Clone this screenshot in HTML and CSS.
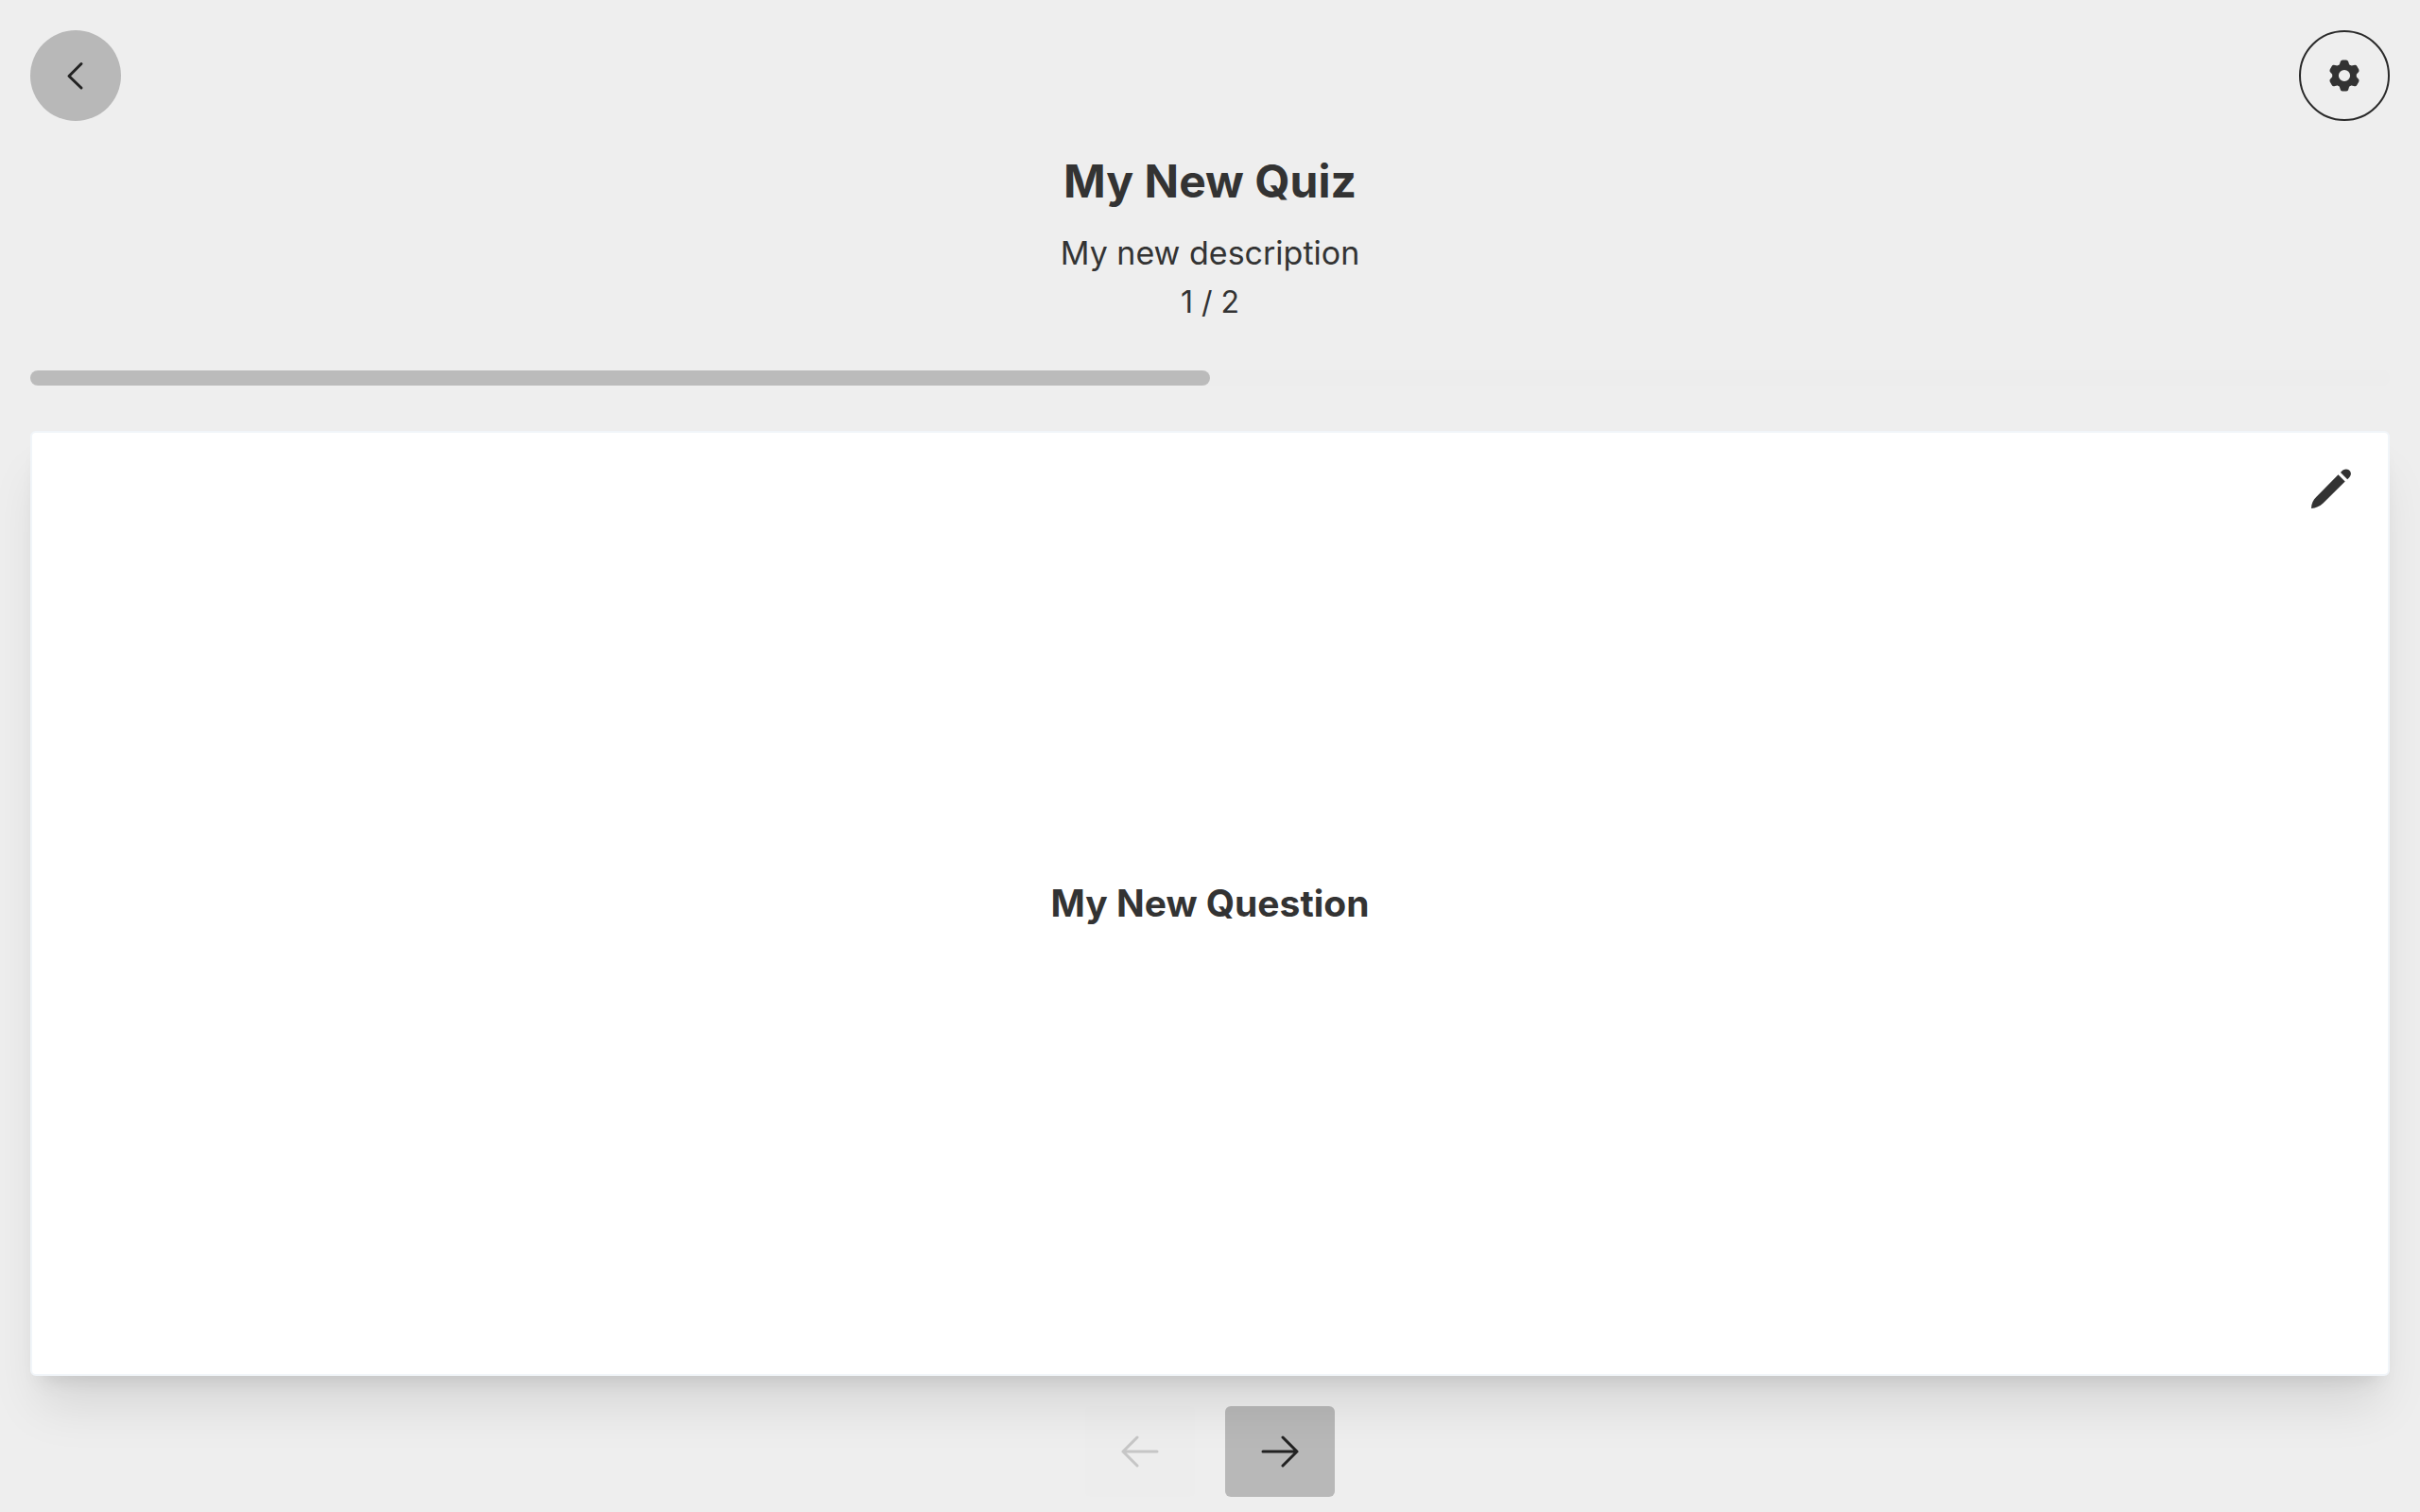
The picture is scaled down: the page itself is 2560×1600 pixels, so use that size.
FILE: index.html
```html
<!DOCTYPE html>
<html lang="en">
<head>
<meta charset="utf-8">
<meta name="viewport" content="width=device-width, initial-scale=1">
<title>My New Quiz</title>
<link rel="stylesheet" href="styles.css">
</head>
<body>
<div class="page">
  <nav class="toolbar">
    <button class="round-button round-button-filled" type="button" aria-label="Back">
      <svg class="icon-chevron" viewBox="0 0 32 32"><path d="M22 3.500 9 16.500 22 29"/></svg>
    </button>
    <button class="round-button round-button-outline" type="button" aria-label="Settings">
      <svg class="icon-gear" viewBox="-20 -20 40 40">
        <circle r="9.300" fill="none" stroke="currentColor" stroke-width="6.400"/>
        <g fill="currentColor">
          <path id="tooth" d="M-6.500-10.500C-5-11.500-4.800-12.500-4.500-14Q-4-16.500-2-16.500H2Q4-16.500 4.500-14C4.800-12.500 5-11.500 6.500-10.500L4-8H-4Z"/>
          <use href="#tooth" transform="rotate(60)"/>
          <use href="#tooth" transform="rotate(120)"/>
          <use href="#tooth" transform="rotate(180)"/>
          <use href="#tooth" transform="rotate(240)"/>
          <use href="#tooth" transform="rotate(300)"/>
        </g>
      </svg>
    </button>
  </nav>
  <header class="heading">
    <h1 class="title">My New Quiz</h1>
    <p class="description">My new description</p>
    <p class="counter">1 / 2</p>
  </header>
  <div class="progress" role="progressbar" aria-label="Quiz progress" aria-valuemin="0" aria-valuemax="2" aria-valuenow="1">
    <div class="progress-value" style="width: 50%"></div>
  </div>
  <main class="card">
    <button class="edit-button" type="button" aria-label="Edit question">
      <svg class="icon-edit" viewBox="0 0 42 42" fill="currentColor"><path d="M28.500 6.300 35.700 13.500 12.500 36.500C9 39.700 5 41.800 0 42 0 37 2 33 5.400 29.700ZM31 4C34-.5 39-.5 41 2.500 43 5.500 41.600 8.500 38.200 11.200Z"/></svg>
    </button>
    <h2 class="question">My New Question</h2>
  </main>
  <footer class="pager">
    <button class="page-button" type="button" aria-label="Previous question" disabled>
      <svg class="icon-arrow" viewBox="0 0 40 34"><path d="M38 17H2M17 2 2 17 17 32"/></svg>
    </button>
    <button class="page-button" type="button" aria-label="Next question">
      <svg class="icon-arrow" viewBox="0 0 40 34"><path d="M2 17H38M23 2 38 17 23 32"/></svg>
    </button>
  </footer>
</div>
</body>
</html>
```
FILE: styles.css
```css
* {
  box-sizing: border-box;
}

body {
  margin: 0;
  background: #eeeeee;
  color: #333333;
  font-family: Inter, sans-serif;
}

.page {
  display: flex;
  flex-direction: column;
  min-height: 100vh;
  padding: 32px 32px 16px;
}

button {
  display: flex;
  align-items: center;
  justify-content: center;
  padding: 0;
  border: 0;
  background: none;
  color: inherit;
  cursor: pointer;
}

.toolbar {
  display: flex;
  justify-content: space-between;
}

.round-button {
  width: 96px;
  height: 96px;
  border-radius: 50%;
}

.round-button-filled {
  background: #b8b8b8;
  color: #222222;
}

.round-button-outline {
  border: 2px solid #2a2a2a;
}

.icon-chevron,
.icon-arrow {
  fill: none;
  stroke: currentColor;
  stroke-width: 3;
  stroke-linecap: round;
  stroke-linejoin: round;
}

.icon-chevron {
  width: 32px;
  height: 32px;
}

.icon-arrow {
  width: 40px;
  height: 34px;
}

.icon-gear {
  width: 40px;
  height: 40px;
}

.heading {
  padding-top: 32px;
  text-align: center;
}

.title {
  margin: 0 0 16px;
  font-size: 48px;
  line-height: 64px;
  font-weight: 700;
}

.description,
.counter {
  margin: 0;
}

.description {
  font-size: 34px;
  line-height: 56px;
}

.counter {
  font-size: 32px;
  line-height: 48px;
  word-spacing: normal;
}

.progress {
  height: 16px;
  margin: 48px 0;
  border-radius: 8px;
  background: #ededed;
}

.progress-value {
  height: 100%;
  border-radius: 8px;
  background: #bbbbbb;
}

.card {
  position: relative;
  display: flex;
  flex: 1;
  align-items: center;
  justify-content: center;
  border: 2px solid #f1f5f9;
  border-radius: 6px;
  background: #ffffff;
  box-shadow: 0 40px 50px -10px rgb(0 0 0 / 10%), 0 16px 20px -12px rgb(0 0 0 / 10%);
}

.edit-button {
  position: absolute;
  top: 38px;
  right: 39px;
}

.icon-edit {
  width: 42px;
  height: 42px;
}

.question {
  margin: 0;
  font-size: 39px;
  line-height: 56px;
  font-weight: 700;
}

.pager {
  display: flex;
  justify-content: center;
  gap: 32px;
  padding-top: 32px;
}

.page-button {
  width: 116px;
  height: 96px;
  border-radius: 6px;
  background: #b8b8b8;
  color: #222222;
}

.page-button:disabled {
  background: #ededed;
  color: #c6c6c6;
  cursor: default;
}
```
